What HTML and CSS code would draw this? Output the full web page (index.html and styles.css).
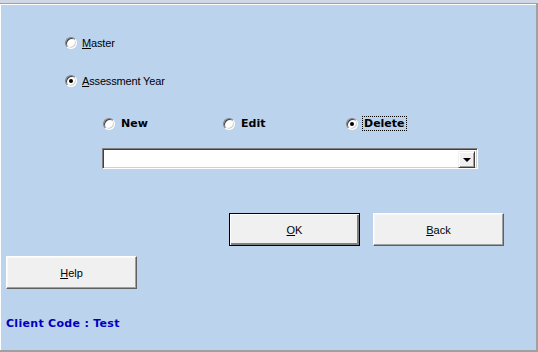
FILE: index.html
```html
<!DOCTYPE html>
<html>
<head>
<meta charset="utf-8">
<link rel="stylesheet" href="styles.css">
</head>
<body>
<div class="window">
  <div class="main-opts">
    <label class="opt"><span class="radio"></span><span class="lbl"><u>M</u>aster</span></label>
    <label class="opt opt-second"><span class="radio checked"></span><span class="lbl"><u>A</u>ssessment Year</span></label>
  </div>
  <div class="sub-opts">
    <label class="sub"><span class="radio"></span><span class="blbl">New</span></label>
    <label class="sub"><span class="radio"></span><span class="blbl">Edit</span></label>
    <label class="sub"><span class="radio checked"></span><span class="blbl focus">Delete</span></label>
  </div>
  <div class="combo">
    <div class="combo-field"></div>
    <div class="combo-btn"><span class="arrow"></span></div>
  </div>
  <div class="btn-row">
    <button class="btn default"><u>O</u>K</button>
    <button class="btn"><u>B</u>ack</button>
  </div>
  <div class="help-row">
    <button class="btn"><u>H</u>elp</button>
  </div>
  <div class="client">Client Code : Test</div>
</div>
</body>
</html>
```

FILE: styles.css
```css
html, body {
  margin: 0;
  padding: 0;
}
body {
  background: #cfd8e4;
  width: 538px;
  height: 352px;
  overflow: hidden;
  font-family: "Liberation Sans", Arial, sans-serif;
  font-size: 11px;
  color: #000;
}
.window {
  margin-top: 3px;
  width: 538px;
  height: 349px;
  box-sizing: border-box;
  background: #bcd3ee;
  border-top: 1px solid #a0a0a0;
  border-right: 2px solid #a0a0a0;
  border-bottom: 2px solid #a0a0a0;
  box-shadow: inset 1px 1px #ffffff;
  display: flex;
  flex-direction: column;
}
.main-opts {
  padding-left: 65px;
  padding-top: 32px;
  display: flex;
  flex-direction: column;
}
.opt {
  display: flex;
  align-items: center;
  height: 14px;
}
.opt-second {
  margin-top: 24px;
}
.radio {
  width: 12px;
  height: 12px;
  box-sizing: border-box;
  border-radius: 50%;
  background: #fff;
  border: 1px solid;
  border-color: #808080 #ffffff #ffffff #808080;
  box-shadow: inset 1px 1px #404040, inset -1px -1px #d4d0c8;
  display: flex;
  align-items: center;
  justify-content: center;
  flex-shrink: 0;
}
.radio.checked::after {
  content: "";
  width: 4px;
  height: 4px;
  border-radius: 50%;
  background: #000;
}
.lbl {
  margin-left: 5px;
  letter-spacing: -0.15px;
}
.sub-opts {
  margin-top: 28px;
  padding-left: 103px;
  display: grid;
  grid-template-columns: 120px 123px auto;
  height: 14px;
}
.sub {
  display: flex;
  align-items: center;
}
.blbl {
  font-family: "DejaVu Sans", Verdana, sans-serif;
  font-weight: bold;
  font-size: 11px;
  margin-left: 4px;
  padding: 0 1px;
  line-height: 13px;
  border: 1px solid transparent;
}
.blbl.focus {
  border: 1px dotted #000;
}
.combo {
  margin-top: 18px;
  margin-left: 102px;
  width: 376px;
  height: 21px;
  box-sizing: border-box;
  border: 1px solid;
  border-color: #808080 #ffffff #ffffff #808080;
  box-shadow: inset 1px 1px #404040, inset -1px -1px #d4d0c8;
  background: #fff;
  display: flex;
  padding: 2px;
}
.combo-field {
  flex: 1;
}
.combo-btn {
  width: 17px;
  height: 17px;
  box-sizing: border-box;
  background: #f0f0f0;
  border: 1px solid;
  border-color: #f0f0f0 #404040 #404040 #f0f0f0;
  box-shadow: inset 1px 1px #ffffff, inset -1px -1px #a0a0a0;
  display: flex;
  align-items: center;
  justify-content: center;
}
.arrow {
  width: 0;
  height: 0;
  border-left: 4px solid transparent;
  border-right: 4px solid transparent;
  border-top: 4px solid #000;
  margin-top: 1px;
}
.btn-row {
  margin-top: 44px;
  padding-left: 229px;
  display: flex;
  gap: 13px;
}
.btn {
  width: 131px;
  height: 33px;
  box-sizing: border-box;
  background: #f0f0f0;
  font-family: "Liberation Sans", Arial, sans-serif;
  font-size: 11px;
  color: #000;
  padding: 0;
  margin: 0;
  border: 1px solid;
  border-color: #ffffff #606060 #606060 #ffffff;
  box-shadow: inset -1px -1px #a0a0a0, inset 1px 1px #f8f8f8;
}
.btn.default {
  border: 1px solid #000;
  box-shadow: inset 1px 1px #ffffff, inset -2px -2px #808080;
}
.help-row {
  margin-top: 10px;
  padding-left: 6px;
  display: flex;
}
.client {
  margin-top: 28px;
  padding-left: 6px;
  font-family: "DejaVu Sans", Verdana, sans-serif;
  font-weight: bold;
  font-size: 11px;
  letter-spacing: 0.3px;
  color: #0000c0;
  line-height: 14px;
}
```
